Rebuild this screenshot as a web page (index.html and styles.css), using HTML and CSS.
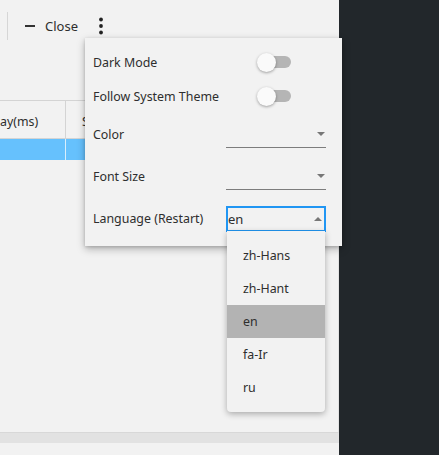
FILE: index.html
```html
<!DOCTYPE html>
<html>
<head>
<meta charset="utf-8">
<link rel="stylesheet" href="styles.css">
</head>
<body>
<div class="screen">
  <div class="app">
    <div class="toolbar">
      <span class="divider"></span>
      <span class="minus"></span>
      <span class="close">Close</span>
      <svg class="dots" width="6" height="18" viewBox="0 0 6 18"><circle cx="3" cy="2.5" r="1.9" fill="#222"/><circle cx="3" cy="9" r="1.9" fill="#222"/><circle cx="3" cy="15.5" r="1.9" fill="#222"/></svg>
    </div>
    <div class="table">
      <div class="thead">
        <div class="th th1">ay(ms)</div>
        <div class="th th2">S</div>
      </div>
      <div class="trow">
        <div class="td td1"></div>
        <div class="td td2"></div>
      </div>
    </div>
    <div class="fill"></div>
    <div class="hscroll"></div>
    <div class="foot"></div>
  </div>
  <div class="dark"></div>

  <div class="menu">
    <div class="row r-toggle">
      <span class="label">Dark Mode</span>
      <span class="toggle"><span class="track"></span><span class="knob"></span></span>
    </div>
    <div class="row r-toggle">
      <span class="label">Follow System Theme</span>
      <span class="toggle"><span class="track"></span><span class="knob"></span></span>
    </div>
    <div class="row r-select">
      <span class="label">Color</span>
      <span class="select"><span class="value"></span><span class="arrow down"></span></span>
    </div>
    <div class="row r-select">
      <span class="label">Font Size</span>
      <span class="select"><span class="value"></span><span class="arrow down"></span></span>
    </div>
    <div class="row r-select">
      <span class="label">Language (Restart)</span>
      <span class="select focused"><span class="value">en</span><span class="arrow up"></span></span>
    </div>
  </div>

  <div class="dropdown">
    <div class="opt">zh-Hans</div>
    <div class="opt">zh-Hant</div>
    <div class="opt sel">en</div>
    <div class="opt">fa-Ir</div>
    <div class="opt">ru</div>
  </div>
</div>
</body>
</html>
```
FILE: styles.css
```css
html, body {
  margin: 0;
  padding: 0;
}
body {
  font-family: "Noto Sans", "Open Sans", sans-serif;
  font-size: 12.4px;
  color: #2e2e2e;
  width: 439px;
  height: 455px;
  overflow: hidden;
}
.screen {
  position: relative;
  display: flex;
  width: 439px;
  height: 455px;
}
.app {
  width: 339px;
  height: 455px;
  background: #f2f2f2;
  display: flex;
  flex-direction: column;
}
.dark {
  flex: 1;
  background: #22272b;
}
.toolbar {
  height: 52px;
  display: flex;
  align-items: center;
  padding-left: 7px;
}
.divider {
  width: 1px;
  height: 28px;
  background: #d6d6d6;
}
.minus {
  width: 10px;
  height: 2px;
  background: #333;
  margin-left: 17px;
}
.close {
  margin-left: 10px;
  line-height: 16px;
  font-size: 13px;
}
.dots {
  margin-left: 20px;
}
.table {
  margin-top: 48px;
  border-top: 1px solid #d4d4d4;
}
.thead {
  display: flex;
  height: 37px;
  border-bottom: 1px solid #d4d4d4;
}
.th {
  display: flex;
  align-items: center;
  padding-top: 3px;
}
.th1 {
  width: 65px;
  border-right: 1px solid #d4d4d4;
}
.th2 {
  padding-left: 16px;
}
.trow {
  display: flex;
  height: 21px;
  background: #66c1fd;
}
.td1 {
  width: 65px;
  border-right: 1px solid #d9eefc;
}
.fill {
  flex: 1;
  border-right: 1px solid #e2e2e2;
  border-bottom: 1px solid #d8d8d8;
}
.hscroll {
  height: 10px;
  background: #e2e2e2;
}
.foot {
  height: 12px;
}

.menu {
  position: absolute;
  left: 85px;
  top: 38px;
  width: 257px;
  height: 208px;
  box-sizing: border-box;
  padding: 7px 0 7px 8px;
  background: #f2f2f2;
  box-shadow: 0 3px 8px rgba(0,0,0,0.28), 0 1px 3px rgba(0,0,0,0.15);
}
.row {
  display: grid;
  grid-template-columns: 133px 1fr;
  align-items: center;
}
.r-toggle { height: 34px; }
.r-select { height: 42px; }
.toggle {
  position: relative;
  display: block;
  width: 34px;
  height: 19px;
  margin-left: 31px;
}
.track {
  position: absolute;
  left: 5px;
  top: 3.5px;
  width: 29px;
  height: 12px;
  border-radius: 6px;
  background: #b5b5b5;
}
.knob {
  position: absolute;
  left: 0;
  top: 0;
  width: 19px;
  height: 19px;
  border-radius: 50%;
  background: #fafafa;
  box-shadow: 0 1px 3px rgba(0,0,0,0.35);
}
.select {
  display: flex;
  align-items: center;
  justify-content: space-between;
  width: 100px;
  height: 26px;
  box-sizing: border-box;
  border-bottom: 1px solid #7d7d7d;
  padding: 0 1px 0 2px;
  margin-top: 1px;
}
.select.focused {
  border: 2px solid #2196f3;
  padding: 0 2px 0 0;
}
.value { line-height: 16px; font-size: 13px; }
.arrow {
  width: 0;
  height: 0;
  border-left: 4.5px solid transparent;
  border-right: 4.5px solid transparent;
}
.arrow.down { border-top: 4.5px solid #777; }
.arrow.up { border-bottom: 4.5px solid #777; }

.dropdown {
  position: absolute;
  left: 227px;
  top: 231px;
  width: 98px;
  padding: 8px 0;
  background: #f2f2f2;
  border-radius: 0 0 4px 4px;
  box-shadow: 0 2px 6px rgba(0,0,0,0.3);
}
.opt {
  height: 33px;
  line-height: 33px;
  padding-left: 16px;
}
.opt.sel {
  background: #b3b3b3;
}
```
